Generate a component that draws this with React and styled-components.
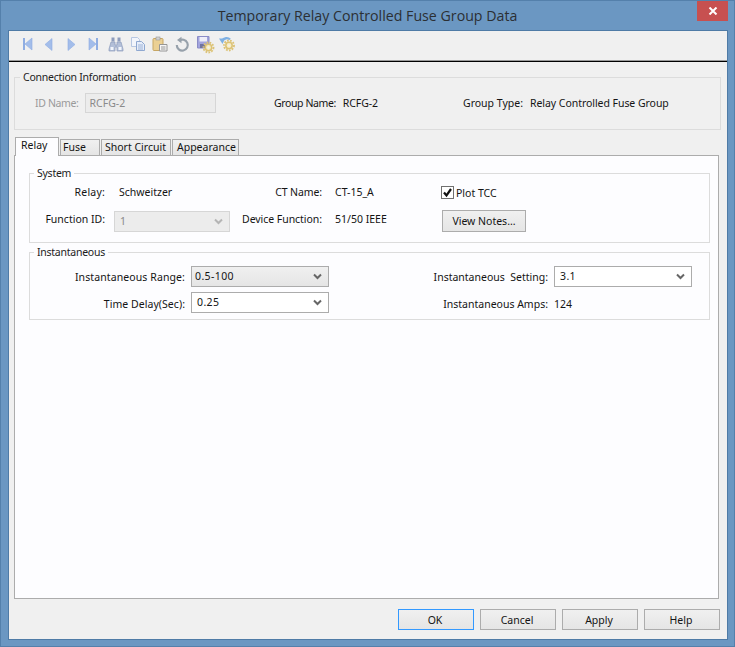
import React from "react";
import styled, { createGlobalStyle } from "styled-components";

const Global = createGlobalStyle`
  html, body { margin: 0; padding: 0; background: #6b97c2; }
  body { font-family: "Noto Sans", "DejaVu Sans", sans-serif; font-size: 10.5px; color: #141414; }
  * { box-sizing: border-box; }
`;

const Frame = styled.div`
  width: 735px; height: 647px;
  display: flex; flex-direction: column;
  background: #6b97c2;
  border: 1px solid #5480ab;
`;
const TitleBar = styled.header`
  height: 29px; flex: none;
  display: grid; grid-template-columns: 37px 1fr 31px;
  padding-right: 6px;
`;
const Title = styled.h1`
  grid-column: 2; margin: 0; padding-top: 6px; text-align: center;
  font: 400 14.2px/18px "Open Sans", sans-serif; color: #2b2f33;
`;
const Close = styled.button`
  grid-column: 3; height: 20px; padding: 0; border: 0; background: #c75050;
  display: flex; align-items: center; justify-content: center;
`;
const Client = styled.div`
  flex: 1; min-height: 0; margin: 0 6px 6px 7px;
  display: flex; flex-direction: column;
  background: #f0f0f0; border: 1px solid #4f7ba6;
`;
const Toolbar = styled.div`
  height: 31px; flex: none; display: flex; align-items: center; gap: 6.2px;
  padding: 0 0 5px 10px; background: #f0f0f0;
  border-bottom: 1px solid #000; box-shadow: inset 0 -1px 0 #9a9a9a;
  svg { overflow: visible; flex: none; }
`;
const Main = styled.main`
  flex: 1; min-height: 0; display: flex; flex-direction: column;
  padding: 8px 6px 0 5px;
`;
const Group = styled.fieldset`
  margin: ${p => p.$top || 0}px 0 0; min-width: 0; padding: 0;
  padding-bottom: ${p => p.$bottom}px;
  border: 1px solid #dcdcdc;
`;
const Legend = styled.legend`
  margin-left: ${p => p.$left}px; padding: 0 3px;
  line-height: 14px; height: 14px; color: #1c1c1c; letter-spacing: -0.25px;
`;
const ConnectionRow = styled.div`
  display: grid; grid-template-columns: 239px 189px 1fr; align-items: center;
  padding: 9px 0 0 20px;
`;
const Pair = styled.div`display: flex; align-items: center; gap: ${p => p.$gap || 7}px;`;
const Label = styled.span`
  text-align: right; white-space: pre;
  color: ${p => (p.$muted ? "#9a9a9a" : "#141414")};
  letter-spacing: ${p => p.$track || 0}px;
  padding-bottom: ${p => p.$lift || 0}px;
  padding-top: ${p => p.$drop || 0}px;
  padding-right: ${p => p.$end || 0}px;
`;
const Value = styled.span`
  white-space: nowrap; padding-left: ${p => p.$inset || 0}px;
  padding-bottom: ${p => p.$lift || 0}px;
  padding-top: ${p => p.$drop || 0}px;
  letter-spacing: ${p => p.$track || 0}px;
`;
const TextBox = styled.div`
  width: 131px; height: 20px; padding: 0 4px; line-height: 18px;
  border: 1px solid #d6d6d6; background: #ececec; color: #8a8a8a;
`;
const TabStrip = styled.div`
  display: flex; align-items: flex-end; gap: 1px; margin-top: 7px; height: 19px; flex: none;
  position: relative; z-index: 1; margin-bottom: -1px; padding-left: 1px;
`;
const Tab = styled.div`
  width: ${p => p.$w}px; height: ${p => (p.$active ? 19 : 17)}px;
  line-height: 15px; padding-left: ${p => p.$pad}px; white-space: nowrap;
  border: 1px solid #acacac;
  border-bottom: ${p => (p.$active ? "0" : "1px solid #acacac")};
  background: ${p => (p.$active ? "#fdfdff" : "linear-gradient(#f0f0f0, #e5e5e5)")};
`;
const Panel = styled.section`
  flex: 1; min-height: 0; margin-right: 2px;
  background: #fdfdff; border: 1px solid #acacac;
  padding: 10px 8px 0 14px;
`;
const SystemGrid = styled.div`
  display: grid; grid-template-columns: 76px 116px 84px 103px auto;
  column-gap: 8px; row-gap: 8px; align-items: center;
  grid-template-rows: 20px 22px; padding-top: 2px;
`;
const InstantGrid = styled.div`
  display: grid; grid-template-columns: 155px 138px 213px 138px;
  column-gap: 6px; row-gap: 5px; align-items: center;
  grid-template-rows: 21px 21px; padding-top: 7px;
`;
const Select = styled.div`
  height: 21px; display: flex; align-items: center; justify-content: space-between;
  padding: 0 6px 0 ${p => p.$pad || 5}px;
  border: 1px solid ${p => (p.$off ? "#d6d6d6" : "#acacac")};
  background: ${p => (p.$raised ? "linear-gradient(#f0f0f0, #e5e5e5)" : p.$off ? "#ececec" : "#fff")};
  color: ${p => (p.$off ? "#8a8a8a" : "#141414")};
  letter-spacing: ${p => (p.$off ? 0 : 0.4)}px;
`;
const SelectText = styled.span`padding-bottom: ${p => p.$lift || 0}px;`;
const Check = styled.label`display: flex; align-items: center; gap: 2px; padding-top: 1px;`;
const Box = styled.span`
  width: 13px; height: 13px; border: 1px solid #707070; background: #fff;
  display: flex; align-items: center; justify-content: center;
`;
const Push = styled.button`
  width: ${p => p.$w}px; height: ${p => p.$h}px; padding: 0 ${p => p.$trim || 0}px 0 0;
  margin-left: ${p => p.$shift || 0}px;
  font: inherit; color: #141414;
  background: linear-gradient(#f0f0f0, #e5e5e5);
  border: 1px solid ${p => (p.$primary ? "#3399ff" : "#acacac")};
`;
const Footer = styled.footer`
  flex: none; display: flex; justify-content: flex-end; gap: 6px;
  padding: 10px 1px 9px 0;
`;

const Chevron = ({ c = "#666" }) => (
  <svg width="9" height="7" viewBox="0 0 9 7"><path d="M1 1.500 4.500 5 8 1.500" fill="none" stroke={c} strokeWidth="2" /></svg>
);
const Ic = ({ children }) => <svg width="16" height="16" viewBox="0 0 16 16">{children}</svg>;
const BLUE = "#a3bdea";
const EDGE = "#8fade2";
const Gear = ({ x, y, c = "#dcc274" }) => (
  <g>
    <circle cx={x} cy={y} r="5" fill="none" stroke={c} strokeWidth="1.800" strokeDasharray="1.700 1.300" />
    <circle cx={x} cy={y} r="3.200" fill="#f5ecc8" stroke={c} strokeWidth="1.500" />
    <circle cx={x} cy={y} r="1" fill="#f0f0f0" />
  </g>
);

const icons = [
  <Ic key="first"><rect x="4" y="2" width="2" height="12" fill={EDGE} /><path d="M13 2v12L6 8z" fill={BLUE} stroke={EDGE} strokeWidth=".6" /></Ic>,
  <Ic key="prev"><path d="M11 2.500v12L4 8.500z" fill={BLUE} stroke={EDGE} strokeWidth=".6" /></Ic>,
  <Ic key="next"><path d="M5 2.500v12l7-6z" fill={BLUE} stroke={EDGE} strokeWidth=".6" /></Ic>,
  <Ic key="last"><path d="M3 2v12l7-6z" fill={BLUE} stroke={EDGE} strokeWidth=".6" /><rect x="10" y="2" width="2" height="12" fill={EDGE} /></Ic>,
  <Ic key="find">
    <path d="M3.500 1.500h3v4h-3zM9.500 1.500h3v4h-3z" fill="#8d9cbc" />
    <path d="M3 6h4v3h2V6h4l2 7v2H9v-4H7v4H1v-2z" fill="#b3bfd8" stroke="#8d9cbc" strokeWidth=".7" />
    <rect x="2.500" y="11" width="3" height="3" fill="#f2f5fb" /><rect x="10.500" y="11" width="3" height="3" fill="#f2f5fb" />
  </Ic>,
  <Ic key="copy">
    <path d="M1.500 1.500h6l2 2v7h-8z" fill="#f2f5fb" stroke="#b7c7e2" />
    <path d="M6.500 5.500h5l3 3v6h-8z" fill="#e6edf9" stroke="#8fa8d0" />
    <path d="M8 9h5M8 11h5M8 13h5" stroke="#9db3d8" />
  </Ic>,
  <Ic key="paste">
    <rect x="1" y="2.500" width="10" height="12" rx="1" fill="#ebd094" stroke="#c7a765" />
    <rect x="4" y="1" width="4" height="3" fill="#d2d2d2" stroke="#969696" strokeWidth=".6" />
    <path d="M7.500 8.500h7.500v6.500H7.500z" fill="#f6f6f6" stroke="#969696" />
    <path d="M9 11h4.500M9 13h4.500" stroke="#969696" />
  </Ic>,
  <Ic key="undo">
    <path d="M5 4.700A5.500 5.500 0 1 1 2.800 9" fill="none" stroke="#97a1ab" strokeWidth="2.200" />
    <path d="M7.500 0.800v6.400L3 4z" fill="#97a1ab" />
  </Ic>,
  <Ic key="save">
    <path d="M0.500 .5h11.500v11.500H.5z" fill="#a2a4de" stroke="#8a8cc6" />
    <rect x="2.500" y="1" width="7.500" height="4.500" fill="#eeeef9" />
    <rect x="3" y="8" width="5" height="4" fill="#7174a0" />
    <Gear x={11.500} y={11.500} />
  </Ic>,
  <Ic key="reset">
    <path d="M3 5c2-3.500 6-3.500 8-1.500" fill="none" stroke="#7fb0e4" strokeWidth="2.400" />
    <path d="M0 2.500h6L3.500 8z" fill="#7fb0e4" />
    <Gear x={10} y={9.500} />
  </Ic>,
];

export default function App() {
  return (
    <>
      <Global />
      <Frame>
        <TitleBar>
          <Title>Temporary Relay Controlled Fuse Group Data</Title>
          <Close aria-label="Close">
            <svg width="10" height="8" viewBox="0 0 10 8"><path d="M1.500 .5 8.500 7.500M8.500 .5 1.500 7.500" stroke="#fff" strokeWidth="2" /></svg>
          </Close>
        </TitleBar>
        <Client>
          <Toolbar>{icons}</Toolbar>
          <Main>
            <Group $bottom={16}>
              <Legend $left={5}>Connection Information</Legend>
              <ConnectionRow>
                <Pair $gap={6}><Label $muted $track={-0.35}>ID Name:</Label><TextBox>RCFG-2</TextBox></Pair>
                <Pair><Label $track={-0.4}>Group Name:</Label><Value $track={-0.1}>RCFG-2</Value></Pair>
                <Pair><Label>Group Type:</Label><Value $track={-0.05}>Relay Controlled Fuse Group</Value></Pair>
              </ConnectionRow>
            </Group>
            <TabStrip>
              <Tab $active $w={44} $pad={5}>Relay</Tab>
              <Tab $w={40} $pad={2}>Fuse</Tab>
              <Tab $w={70} $pad={3}>Short Circuit</Tab>
              <Tab $w={67} $pad={4}>Appearance</Tab>
            </TabStrip>
            <Panel>
              <Group $bottom={10}>
                <Legend $left={4}>System</Legend>
                <SystemGrid>
                  <Label $end={1} $track={0.2}>Relay:</Label><Value $inset={5}>Schweitzer</Value>
                  <Label $track={-0.1}>CT Name:</Label><Value $inset={5}>CT-15_A</Value>
                  <Check><Box><svg width="11" height="11" viewBox="0 0 11 11"><path d="M2 5.500 4.500 8.500 9 2" fill="none" stroke="#111" strokeWidth="2.200" /></svg></Box>Plot TCC</Check>
                  <Label $lift={4} $end={1}>Function ID:</Label>
                  <Select $off>1<Chevron c="#b5b5b5" /></Select>
                  <Label $lift={4} $track={-0.05}>Device Function:</Label><Value $inset={5} $lift={4}>51/50 IEEE</Value>
                  <Push type="button" $w={84} $h={22} $shift={1}>View Notes...</Push>
                </SystemGrid>
              </Group>
              <Group $top={2} $bottom={6}>
                <Legend $left={4}>Instantaneous</Legend>
                <InstantGrid>
                  <Label $track={0.1} $drop={1}>Instantaneous Range:</Label>
                  <Select $raised $pad={3}><SelectText $lift={2}>0.5-100</SelectText><Chevron /></Select>
                  <Label $drop={1}>Instantaneous  Setting:</Label>
                  <Select><SelectText $lift={2}>3.1</SelectText><Chevron /></Select>
                  <Label $track={0.05} $drop={2}>Time Delay(Sec):</Label>
                  <Select><SelectText $lift={2}>0.25</SelectText><Chevron /></Select>
                  <Label $drop={2}>Instantaneous Amps:</Label>
                  <Value $drop={2}>124</Value>
                </InstantGrid>
              </Group>
            </Panel>
            <Footer>
              <Push type="button" $w={76} $h={21} $trim={2} $primary>OK</Push>
              <Push type="button" $w={76} $h={21} $trim={2}>Cancel</Push>
              <Push type="button" $w={76} $h={21} $trim={2}>Apply</Push>
              <Push type="button" $w={76} $h={21} $trim={2}>Help</Push>
            </Footer>
          </Main>
        </Client>
      </Frame>
    </>
  );
}
